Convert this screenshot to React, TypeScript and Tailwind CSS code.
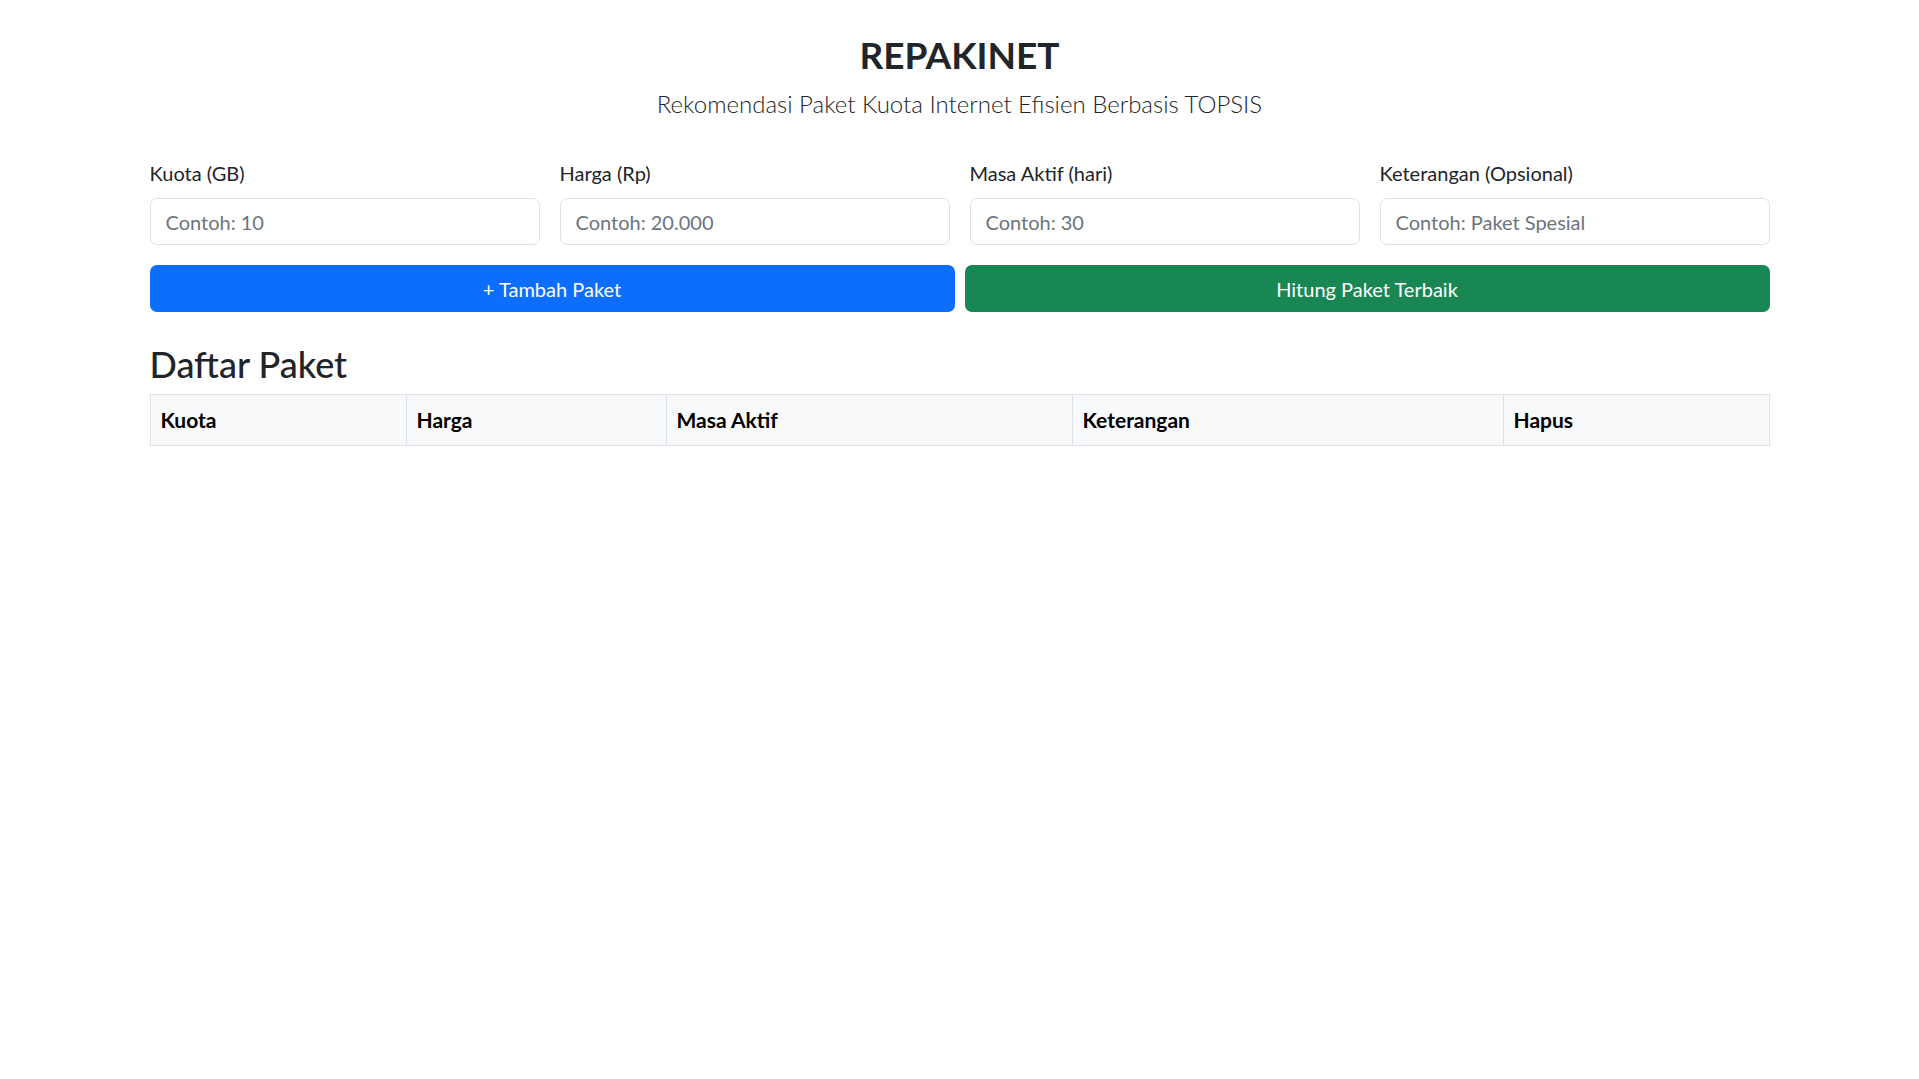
import React from 'react';

const fields = [
  { label: 'Kuota (GB)', placeholder: 'Contoh: 10' },
  { label: 'Harga (Rp)', placeholder: 'Contoh: 20.000' },
  { label: 'Masa Aktif (hari)', placeholder: 'Contoh: 30' },
  { label: 'Keterangan (Opsional)', placeholder: 'Contoh: Paket Spesial' },
];

export default function App() {
  return (
    <div className="min-h-screen bg-white text-[#212529] font-['Lato','Noto_Sans',sans-serif]">
      <div className="mx-auto w-full max-w-[1650px] px-[15px] pt-[31px]">
        <h1 className="mb-[6px] text-center text-[37px] font-bold leading-[48px]">REPAKINET</h1>
        <p className="text-center text-[24px] font-light leading-[37px]">
          Rekomendasi Paket Kuota Internet Efisien Berbasis TOPSIS
        </p>

        <div className="mt-[36px] grid grid-cols-4 gap-x-[20px]">
          {fields.map(f => (
            <div key={f.label} className="flex flex-col">
              <label className="mb-[10px] text-[20px] leading-[30px]">{f.label}</label>
              <input
                type="text"
                placeholder={f.placeholder}
                className="h-[47px] w-full rounded-[7px] border border-[#dee2e6] px-[15px] text-[20px] outline-none placeholder:text-[#6c757d]"
              />
            </div>
          ))}
        </div>

        <div className="mt-[20px] grid grid-cols-2 gap-[10px]">
          <button className="h-[47px] rounded-[7px] bg-[#0d6efd] text-[20px] text-white">+ Tambah Paket</button>
          <button className="h-[47px] rounded-[7px] bg-[#198754] text-[20px] text-white">Hitung Paket Terbaik</button>
        </div>

        <h2 className="mb-[6px] mt-[28px] text-[36px] font-medium leading-[48px]">Daftar Paket</h2>
        <table className="w-full table-fixed border-collapse border border-[#dee2e6]">
          <thead>
            <tr className="bg-[#f8f9fa] text-left text-[21px] leading-[30px] text-black">
              <th className="w-[256px] border border-[#dee2e6] p-[10px] font-bold">Kuota</th>
              <th className="w-[260px] border border-[#dee2e6] p-[10px] font-bold">Harga</th>
              <th className="w-[406px] border border-[#dee2e6] p-[10px] font-bold">Masa Aktif</th>
              <th className="w-[431px] border border-[#dee2e6] p-[10px] font-bold">Keterangan</th>
              <th className="border border-[#dee2e6] p-[10px] font-bold">Hapus</th>
            </tr>
          </thead>
          <tbody></tbody>
        </table>
      </div>
    </div>
  );
}
